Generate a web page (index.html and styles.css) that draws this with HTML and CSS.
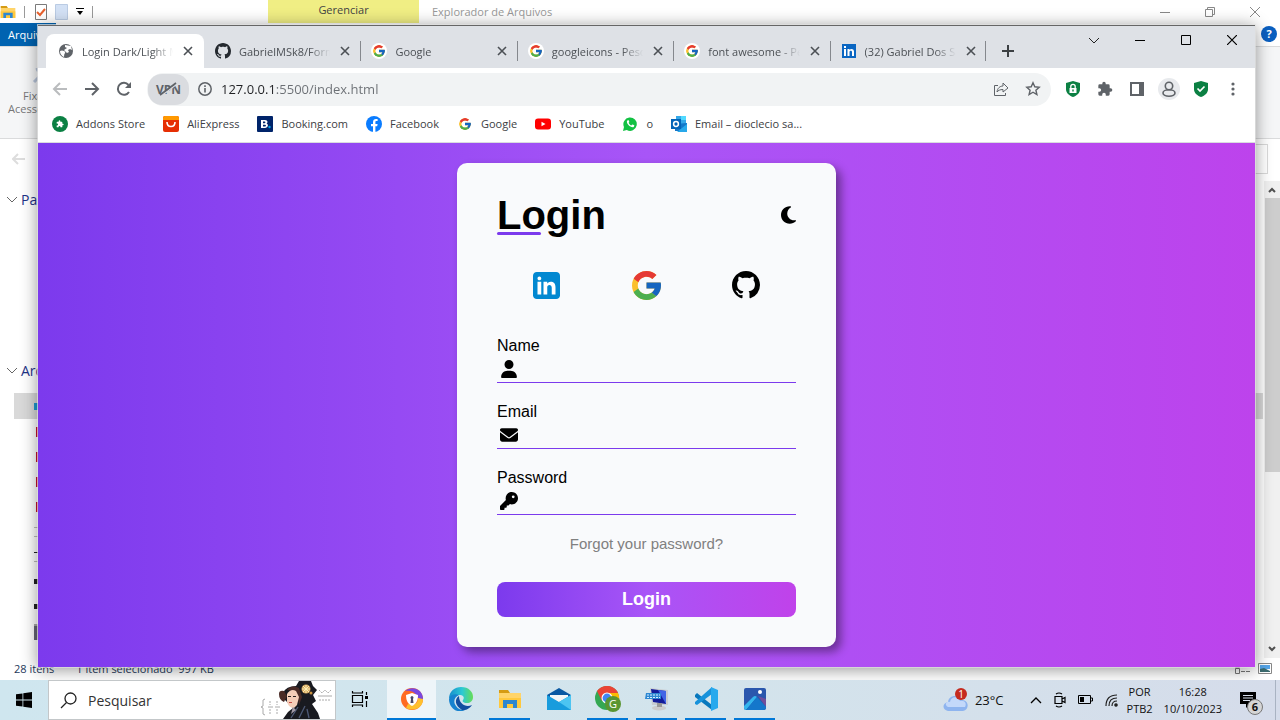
FILE: index.html
```html
<!DOCTYPE html>
<html lang="pt-BR">
<head>
<meta charset="utf-8">
<title>Login Dark/Light</title>
<link rel="stylesheet" href="styles.css">
</head>
<body>
<svg class="sprite" aria-hidden="true">
  <symbol id="google" viewBox="4 4 40 40">
    <path fill="#fbc02d" d="M43.6 20H24v8h11.3c-1.6 4.7-6.1 8-11.3 8-6.600 0-12-5.400-12-12s5.400-12 12-12c3.100 0 5.800 1.200 8 3l5.700-5.600C34 6 29.300 4 24 4 13 4 4 13 4 24s9 20 20 20 20-9 20-20c0-1.300-.1-2.700-.4-4z"/>
    <path fill="#e53935" d="M6.300 14.700l6.600 4.800C14.700 15.100 19 12 24 12c3.100 0 5.800 1.200 8 3l5.700-5.600C34 6 29.300 4 24 4 16.300 4 9.700 8.300 6.300 14.700z"/>
    <path fill="#4caf50" d="M24 44c5.200 0 9.900-2 13.400-5.200l-6.200-5.200C29.200 35 26.700 36 24 36c-5.200 0-9.600-3.300-11.300-7.900l-6.500 5C9.500 39.600 16.200 44 24 44z"/>
    <path fill="#1565c0" d="M43.600 20H24v8h11.300c-.8 2.200-2.200 4.200-4.100 5.600l6.200 5.200C37 39.200 44 34 44 24c0-1.300-.1-2.700-.4-4z"/>
  </symbol>
  <symbol id="github" viewBox="0 0 16 16">
    <path d="M8 0C3.580 0 0 3.580 0 8c0 3.540 2.290 6.530 5.470 7.590.4.070.55-.17.55-.38 0-.19-.01-.82-.01-1.490-2.010.370-2.530-.49-2.690-.94-.09-.23-.48-.94-.82-1.130-.28-.15-.68-.52-.01-.53.63-.01 1.080.58 1.230.82.72 1.210 1.870.87 2.330.66.07-.52.28-.87.51-1.070-1.780-.2-3.640-.89-3.640-3.950 0-.87.31-1.590.82-2.150-.08-.2-.36-1.020.08-2.120 0 0 .67-.21 2.200.82.64-.18 1.320-.27 2-.27s1.360.09 2 .27c1.530-1.040 2.200-.82 2.200-.82.44 1.100.16 1.920.08 2.120.51.56.82 1.270.82 2.150 0 3.070-1.870 3.750-3.650 3.950.29.25.54.73.54 1.480 0 1.070-.01 1.930-.01 2.200 0 .21.15.46.55.38A8.010 8.010 0 0 0 16 8c0-4.420-3.580-8-8-8z"/>
  </symbol>
  <symbol id="linkedin" viewBox="6 6 36 36">
    <path d="M42 37c0 2.760-2.240 5-5 5H11c-2.760 0-5-2.240-5-5V11c0-2.760 2.240-5 5-5h26c2.760 0 5 2.240 5 5z"/>
    <path fill="#fff" d="M12 19h5v17h-5zM14.500 17C13 17 12 15.900 12 14.500 12 13.100 13 12 14.500 12c1.500 0 2.500 1.100 2.500 2.500S16 17 14.500 17zM36 36h-5v-9.100c0-2.200-1.200-3.700-3.200-3.700-1.500 0-2.300 1-2.700 2-.1.300-.1 1.300-.1 1.800v9h-5V19h5v2.600c.7-1.100 1.900-2.600 4.700-2.600 3.600 0 6.300 2.300 6.300 7.300z"/>
  </symbol>
  <symbol id="close" viewBox="0 0 10 10"><path d="M1 1l8 8M9 1L1 9" fill="none" stroke="currentColor" stroke-width="1.600"/></symbol>
  <symbol id="shield" viewBox="0 0 16 18"><path fill="#0b8043" d="M8 1l7 2v6c0 4-3 6.500-7 8-4-1.500-7-4-7-8V3z"/></symbol>
  <symbol id="puzzle" viewBox="0 0 24 24"><path d="M20.500 11H19V7a2 2 0 0 0-2-2h-4V3.500a2.500 2.500 0 0 0-5 0V5H4a2 2 0 0 0-2 2v3.800h1.500a2.700 2.700 0 0 1 0 5.400H2V20a2 2 0 0 0 2 2h3.800v-1.500a2.700 2.700 0 0 1 5.400 0V22H17a2 2 0 0 0 2-2v-4h1.500a2.500 2.500 0 0 0 0-5z"/></symbol>
  <symbol id="chevron" viewBox="0 0 12 7"><path d="M1 1l5 5 5-5" fill="none" stroke="currentColor"/></symbol>
  <symbol id="folder" viewBox="0 0 24 20">
    <path fill="#d59b13" d="M1 1h9l2 3H1z"/><path fill="#ffd469" d="M1 4h22v15H1z"/><path fill="#ffc83d" d="M1 9h22v10H1z"/>
    <path fill="#2c87d1" d="M5 11h14v8h-4v-4H9v4H5z"/>
  </symbol>
</svg>

<div class="desktop">
  <section class="explorer" aria-label="Explorador de Arquivos">
    <header class="ex-title">
      <div class="ex-quick">
        <svg width="16" height="16"><use href="#folder"/></svg><i></i>
        <svg width="12" height="16" viewBox="0 0 12 16"><path fill="#fff" stroke="#7a7a7a" d="M.5.5h11v15H.5z"/><path d="M2 8l3 3 5-6" fill="none" stroke="#e8602c" stroke-width="2"/></svg>
        <svg width="13" height="16" viewBox="0 0 13 16"><path fill="#d3e1f5" stroke="#bacbe3" d="M.5.5h12v15H.5z"/></svg>
        <svg width="8" height="8" viewBox="0 0 8 8"><path d="M0 0h8v1H0zM1 3h6L4 7z"/></svg><i></i>
      </div>
      <span class="ex-manage">Gerenciar</span>
      <span class="ex-name">Explorador de Arquivos</span>
      <div class="ex-controls">
        <svg width="10" height="10"><path d="M0 5.500h10" stroke="#888"/></svg>
        <svg width="10" height="10"><path d="M.5 2.500h7v7h-7zM2.500 2V.5h7v7H8" fill="none" stroke="#888"/></svg>
        <svg width="10" height="10"><path d="M0 0l10 10M10 0L0 10" stroke="#888"/></svg>
      </div>
    </header>
    <div class="ex-menu"><button class="ex-file">Arquivo</button><span class="ex-help">?</span></div>
    <div class="ex-ribbon"><svg width="20" height="20" viewBox="0 0 20 20"><path d="M2 18l7-7M5 5l10 10M4 6l10-4" fill="none" stroke="#b8c5da" stroke-width="3"/></svg><span>Fixar no</span><span>Acesso</span></div>
    <div class="ex-address">
      <svg width="13" height="12" viewBox="0 0 13 12"><path d="M13 6H1M6 1L1 6l5 5" fill="none" stroke="#ddd" stroke-width="2"/></svg>
      <div class="ex-search"></div>
    </div>
    <div class="ex-body">
      <div class="ex-list">
        <div class="ex-group ex-folders"><svg width="12" height="7"><use href="#chevron"/></svg>Pastas</div>
        <div class="ex-group"><svg width="12" height="7"><use href="#chevron"/></svg>Arquivos</div>
        <ul class="ex-files">
          <li class="selected"><i class="f-blue"></i></li>
          <li><i class="f-red"></i></li><li><i class="f-red"></i></li><li><i class="f-red"></i></li><li><i class="f-red"></i></li>
          <li><i class="f-text"></i></li><li><i class="f-text f-top"></i></li>
          <li><i class="f-black"></i></li><li><i class="f-black"></i></li><li><i class="f-bin"></i></li>
        </ul>
      </div>
      <div class="ex-scroll">
        <svg width="8" height="6" viewBox="0 0 8 6"><path d="M1 5l3-3 3 3" fill="none" stroke="#505050" stroke-width="2"/></svg>
        <div class="ex-thumb"></div>
        <svg width="8" height="6" viewBox="0 0 8 6"><path d="M1 1l3 3 3-3" fill="none" stroke="#505050" stroke-width="2"/></svg>
      </div>
    </div>
    <footer class="ex-status"><span>28 itens</span><span>1 item selecionado&nbsp; 997 KB</span>
      <div class="ex-views">
        <svg width="16" height="12" viewBox="0 0 16 12"><path d="M.5.5h4v5h-4zM.5 6.500h4v5h-4z" fill="#fff" stroke="#777"/><path d="M6 3.500h4m1 0h4M6 9.500h4m1 0h4" stroke="#777"/></svg>
        <svg width="14" height="11" viewBox="0 0 14 11"><path fill="#fff" stroke="#888" d="M.5.5h13v10H.5z"/><path fill="#56a5e8" d="M2 2h10v4H2z"/><path fill="#3b6b6f" d="M2 6l4-1 6 3v1H2z"/></svg>
      </div>
    </footer>
  </section>

  <section class="browser" aria-label="Navegador">
    <header class="tabs">
      <div class="tab-list">
      <div class="tab active"><svg width="16" height="16" viewBox="0 0 16 16"><circle cx="8" cy="8" r="7" fill="#5f6368"/><path d="M2 8q2-1 4 0t1 2-1 4Q2 12 2 8zM7 2l6 1 1 4-2-1-2 1 1 2-2 1-3-3 3-2-2-1z" fill="#fff"/></svg><span>Login Dark/Light Mode</span><button aria-label="Fechar"><svg width="10" height="10"><use href="#close"/></svg></button></div>
      <div class="tab"><svg width="16" height="16" fill="#24292f"><use href="#github"/></svg><span>GabrielMSk8/Formulario</span><button aria-label="Fechar"><svg width="10" height="10"><use href="#close"/></svg></button></div>
      <div class="tab"><svg class="disc" width="16" height="16"><use href="#google"/></svg><span>Google</span><button aria-label="Fechar"><svg width="10" height="10"><use href="#close"/></svg></button></div>
      <div class="tab"><svg class="disc" width="16" height="16"><use href="#google"/></svg><span>googleicons - Pesquisa</span><button aria-label="Fechar"><svg width="10" height="10"><use href="#close"/></svg></button></div>
      <div class="tab"><svg class="disc" width="16" height="16"><use href="#google"/></svg><span>font awesome - Pesquisa</span><button aria-label="Fechar"><svg width="10" height="10"><use href="#close"/></svg></button></div>
      <div class="tab"><svg width="16" height="16" viewBox="0 0 16 16"><path fill="#0a66c2" d="M1 1h14v14H1z"/><path fill="#fff" d="M3 6h2v7H3zM3 3h2v2H3zM6.500 6h2v1c1-1.700 4.500-1.500 4.500 1.500V13h-2V9c0-1.800-2.500-1.800-2.500 0v4h-2z"/></svg><span>(32) Gabriel Dos Santos</span><button aria-label="Fechar"><svg width="10" height="10"><use href="#close"/></svg></button></div>
      </div>
      <button class="new-tab" aria-label="Nova guia"><svg width="12" height="12"><path d="M6 0v12M0 6h12" stroke="#3c4043" stroke-width="2"/></svg></button>
      <div class="win-controls">
        <button aria-label="Guias"><svg width="12" height="7"><use href="#chevron"/></svg></button>
        <button aria-label="Minimizar"><svg width="10" height="10"><path d="M0 5.500h10" stroke="#000"/></svg></button>
        <button aria-label="Maximizar"><svg width="10" height="10"><path d="M.5.500h9v9h-9z" fill="none" stroke="#000"/></svg></button>
        <button aria-label="Fechar janela"><svg width="10" height="10"><path d="M0 0l10 10M10 0L0 10" stroke="#000" stroke-width="1.200"/></svg></button>
      </div>
    </header>
    <div class="toolbar">
      <button aria-label="Voltar"><svg width="16" height="14" viewBox="0 0 16 14"><path d="M15 7H2M8 1L2 7l6 6" fill="none" stroke="#babcbe" stroke-width="2"/></svg></button>
      <button aria-label="Avançar"><svg width="16" height="14" viewBox="0 0 16 14"><path d="M1 7h13M8 1l6 6-6 6" fill="none" stroke="#5f6368" stroke-width="2"/></svg></button>
      <button aria-label="Recarregar"><svg width="16" height="16" viewBox="0 0 16 16"><path d="M13 11a6 6 0 1 1-.5-7" fill="none" stroke="#5f6368" stroke-width="2"/><path fill="#5f6368" d="M15 1v6H9z"/></svg></button>
      <div class="omnibox">
        <button class="vpn">VPN<svg width="24" height="14" viewBox="0 0 24 14"><path d="M5 14L21 2" stroke="#dadce0" stroke-width="1.500"/><path d="M4 13L20 1" stroke="#5f6368" stroke-width="1.600"/></svg></button>
        <svg width="14" height="14" viewBox="0 0 14 14"><circle cx="7" cy="7" r="6.200" fill="none" stroke="#5f6368" stroke-width="1.500"/><path d="M6.200 6h1.600v4.500H6.200zM6.200 3.300h1.600v1.600H6.200z" fill="#5f6368"/></svg>
        <input class="url" aria-label="Endereço" value="127.0.0.1:5500/index.html">
        <button aria-label="Compartilhar"><svg width="16" height="16" viewBox="0 0 16 16" fill="none" stroke="#5f6368"><path d="M5 4.500H1.500v10h11V12"/><path d="M4 11c.5-4 3-6 6-6V2l5 5-5 4V8.500c-3 0-5 1-6 2.500z"/></svg></button>
        <button aria-label="Favoritar"><svg width="16" height="16" viewBox="0 0 16 16"><path d="M8 1.800l1.800 4 4.400.4-3.300 3 1 4.300L8 11.200l-3.900 2.300 1-4.300-3.300-3 4.400-.4z" fill="none" stroke="#5f6368" stroke-width="1.400"/></svg></button>
      </div>
      <button aria-label="VPN segura"><svg width="16" height="18" viewBox="0 0 16 18"><use href="#shield"/><path fill="none" stroke="#fff" stroke-width="1.300" d="M5.800 8V6.500a2.200 2.200 0 0 1 4.400 0V8"/><path fill="#fff" d="M4.500 8h7v5h-7z"/><path fill="#0b8043" d="M7.300 9.500h1.400v2H7.300z"/></svg></button>
      <button aria-label="Extensões"><svg width="16" height="16" fill="#5f6368"><use href="#puzzle"/></svg></button>
      <button aria-label="Painel lateral"><svg width="14" height="14" viewBox="0 0 14 14"><path d="M0 0h14v14H0zM2 2v10h7V2z" fill="#5f6368" fill-rule="evenodd"/></svg></button>
      <button class="profile" aria-label="Perfil"><svg width="16" height="16" viewBox="0 0 16 16" fill="none" stroke="#5f6368" stroke-width="1.600"><circle cx="8" cy="5" r="3.700"/><ellipse cx="8" cy="12" rx="6" ry="3.200"/></svg></button>
      <button aria-label="Proteção"><svg width="16" height="18" viewBox="0 0 16 18"><use href="#shield"/><path fill="none" stroke="#fff" stroke-width="1.700" d="M4.500 8.500L7 11l4.500-4.500"/></svg></button>
      <button aria-label="Menu"><svg width="4" height="14" fill="#5f6368"><circle cx="2" cy="2" r="1.600"/><circle cx="2" cy="7" r="1.600"/><circle cx="2" cy="12" r="1.600"/></svg></button>
    </div>
    <nav class="bookmarks">
      <a href="#"><svg width="16" height="16" viewBox="0 0 16 16"><circle cx="8" cy="8" r="8" fill="#0b8043"/><use href="#puzzle" x="4" y="4" width="8" height="8" fill="#fff"/></svg>Addons Store</a>
      <a href="#"><svg width="16" height="16" viewBox="0 0 16 16"><rect width="16" height="16" rx="2" fill="#e62e04"/><path d="M0 2q0-2 2-2h12q2 0 2 2v2H0z" fill="#ff9900"/><path d="M4 6c0 6 8 6 8 0" fill="none" stroke="#fff" stroke-width="1.600"/></svg>AliExpress</a>
      <a href="#"><svg width="16" height="16" viewBox="0 0 16 16"><rect width="16" height="16" rx="1" fill="#00246a"/><path fill="#fff" fill-rule="evenodd" d="M4 4h4c3 0 3 3 1.500 3.600C12 8.500 11 12 8 12H4zM6 5.500v1.700h1.500c1.200 0 1.200-1.700 0-1.700zM6 8.700v1.800h2c1.300 0 1.300-1.800 0-1.800z"/><circle cx="12.500" cy="11" r="1.200" fill="#00a7ea"/></svg>Booking.com</a>
      <a href="#"><svg width="16" height="16" viewBox="0 0 16 16"><circle cx="8" cy="8" r="8" fill="#0a7cff"/><path fill="#fff" d="M7 16v-5.700H5V8h2V6.200C7 4.200 8.200 3 10 3l1.600.1v2h-1c-1 0-1.200.5-1.200 1.200V8h2.200l-.4 2.300H9.400V16z"/></svg>Facebook</a>
      <a href="#"><svg class="disc" width="16" height="16"><use href="#google"/></svg>Google</a>
      <a href="#"><svg width="16" height="16" viewBox="0 0 16 16"><rect y="2.500" width="16" height="11" rx="3" fill="#f00"/><path fill="#fff" d="M6.500 5.700v4.600l4-2.300z"/></svg>YouTube</a>
      <a href="#"><svg width="16" height="16" viewBox="0 0 16 16"><path fill="#12c143" d="M1 15l1-4a6.700 6.700 0 1 1 2.800 3z"/><path d="M5 4.700c-1 3 4 7.500 6.700 6.300.8-.7.700-1.700.3-1.900l-1.800-.7-1 1C8 9 7 8 6.600 6.800l.8-.9L6.500 4z" fill="#fff"/></svg>o</a>
      <a href="#"><svg width="16" height="16" viewBox="0 0 16 16"><path fill="#35a8e8" d="M5 0h10v8H5z"/><path fill="#50d9ff" d="M10 0h5v4h-5z"/><path fill="#1477c9" d="M4 8l12-1v8H4z"/><path fill="#28a8ea" d="M16 8v8H6z"/><rect y="3" width="10" height="10" fill="#0364b8"/><circle cx="5" cy="8" r="2.400" fill="none" stroke="#fff" stroke-width="1.500"/></svg>Email – dioclecio sa...</a>
    </nav>
    <main class="page">
      <form class="card">
        <div class="card-head">
          <h1>Login</h1>
          <button type="button" class="mode" aria-label="Modo escuro"><svg width="15" height="18" viewBox="0 32 384 448"><path d="M223.500 32C100 32 0 132.300 0 256S100 480 223.500 480c60.600 0 115.500-24.200 155.800-63.400c5-4.900 6.300-12.500 3.100-18.700s-10.100-9.700-17-8.500c-9.800 1.700-19.800 2.600-30.100 2.600c-96.900 0-175.500-78.800-175.500-176c0-65.800 36-123.100 89.300-153.300c6.100-3.500 9.200-10.500 7.700-17.300s-7.300-11.900-14.300-12.500c-6.300-.5-12.600-.8-19-.8z"/></svg></button>
        </div>
        <div class="social">
          <a href="#" aria-label="LinkedIn"><svg width="27" height="27" fill="#0288d1"><use href="#linkedin"/></svg></a>
          <a href="#" aria-label="Google"><svg width="29" height="29"><use href="#google"/></svg></a>
          <a href="#" aria-label="GitHub"><svg width="28" height="28"><use href="#github"/></svg></a>
        </div>
        <div class="fields">
          <div class="field"><label for="name">Name</label><div class="entry"><svg width="18" height="18" viewBox="-32 0 512 512"><path d="M224 256A128 128 0 1 0 224 0a128 128 0 1 0 0 256zm-45.700 48C79.800 304 0 383.800 0 482.300C0 498.700 13.300 512 29.700 512H418.300c16.400 0 29.700-13.300 29.700-29.700C448 383.800 368.200 304 269.700 304H178.300z"/></svg><input id="name" type="text"></div></div>
          <div class="field"><label for="email">Email</label><div class="entry"><svg width="18" height="18" viewBox="0 0 512 512"><path d="M48 64C21.500 64 0 85.500 0 112c0 15.100 7.100 29.300 19.200 38.400L236.800 313.600c11.400 8.500 27 8.500 38.400 0L492.800 150.400c12.100-9.100 19.200-23.300 19.200-38.400c0-26.500-21.500-48-48-48H48zM0 176V384c0 35.300 28.700 64 64 64H448c35.300 0 64-28.700 64-64V176L294.400 339.200c-22.800 17.100-54 17.100-76.800 0L0 176z"/></svg><input id="email" type="email"></div></div>
          <div class="field"><label for="password">Password</label><div class="entry"><svg width="18" height="18" viewBox="0 0 512 512"><path d="M336 352c97.200 0 176-78.800 176-176S433.200 0 336 0S160 78.800 160 176c0 18.700 2.900 36.800 8.300 53.700L7 391c-4.500 4.500-7 10.600-7 17v80c0 13.300 10.700 24 24 24h80c13.300 0 24-10.700 24-24V448h40c13.300 0 24-10.700 24-24V384h40c6.400 0 12.500-2.500 17-7l33.300-33.300c16.900 5.400 35 8.300 53.700 8.300zM376 96a40 40 0 1 1 0 80 40 40 0 1 1 0-80z"/></svg><input id="password" type="password"></div></div>
        </div>
        <a class="forgot" href="#">Forgot your password?</a>
        <button type="submit" class="submit">Login</button>
      </form>
    </main>
  </section>

  <footer class="taskbar">
    <button class="start" aria-label="Iniciar"><svg width="16" height="16" viewBox="0 0 16 16"><path d="M0 2.300L6.500 1.400v6.200H0zM7.300 1.300L16 0v7.600H7.300zM0 8.400h6.500v6.200L0 13.700zM7.300 8.400H16V16l-8.700-1.300z"/></svg></button>
    <div class="search">
      <svg width="17" height="17" viewBox="0 0 17 17" fill="none" stroke="#222" stroke-width="1.300"><circle cx="10.500" cy="6.500" r="5.500"/><path d="M6.500 10.500L1 16"/></svg>
      <input aria-label="Pesquisar" placeholder="Pesquisar">
      <svg width="76" height="38" viewBox="0 0 76 38">
        <g stroke="#aaa" fill="none"><path d="M6 18q-3 0-2 4t-2 4q3 0 2 4t2 4M9 26h5M16 26h5M59 15h14"/><path d="M11 20v4m0 4v5m7-13v4m0 4v5M60 9l3 3 3-3 3 3 3-3M60 19h12" stroke-dasharray="2 1"/></g>
        <path fill="#191a20" d="M24 12q3-7 13-7l3-5h12l2 5 4 4-4 5 3 6-4 3 6 9 2 6H24l5-7 5-4-8-8z"/>
        <path fill="#4a2b26" d="M20 13q0-4 5-3l3 5-3 6q-5-2-5-8zM28 9q5-6 12-2l3 9-3 8q-1-12-6-14z"/>
        <path fill="#f5cdb8" d="M28 13q4-6 9-3l3 6-2 8-3 3q-5 0-7-6z"/><path fill="#c74a45" d="M30 21h3v1h-3z"/><path fill="#29201f" d="M29 15h3v1h-3zM34 15h3v1h-3z"/>
        <circle cx="47" cy="8" r="4.500" fill="#d5a963"/><path d="M43 8h8M47 4v8M44 5l6 6M50 5l-6 6" stroke="#fff0b4"/><circle cx="52" cy="12" r="1.500" fill="#c9903f"/>
        <path d="M32 37l7-11M40 37l6-12M50 37l-2-9" stroke="#4d5875" stroke-width="1.300"/><path fill="#a29aa7" d="M34 26l3 3-5 4z"/>
      </svg>
    </div>
    <button class="task view" aria-label="Visão de tarefas"><svg width="18" height="16" viewBox="0 0 18 16" fill="none" stroke="#000" stroke-width="1.200"><path d="M1.500 4.500h10v7h-10zM1.500 0v2h10V0M1.500 16v-2h10v2M15.500 1v3m0 6v6"/><path d="M14 5h3v3h-3z" fill="#000" stroke="none"/></svg></button>
    <button class="task current" aria-label="Navegador Seguro"><svg width="24" height="24" viewBox="0 0 24 24"><circle cx="12" cy="12" r="11" fill="#ff6b22"/><path fill="#7948df" d="M5 4C12-2 23 2 23 12h-5C17 5 10 3 5 4z"/><path fill="#ffc02e" d="M23 12c0 9-9 13-17 9l2-4c6 2 10 0 10-6z"/><path fill="#fff" d="M12 6l6 2c0 6-2 9-6 11-4-2-6-5-6-11z"/><path fill="#4a4967" d="M12 9a2 2 0 0 1 1 3l.5 4h-3l.5-4a2 2 0 0 1 1-3z"/></svg></button>
    <button class="task" aria-label="Edge"><svg width="24" height="24" viewBox="0 0 24 24"><defs><linearGradient id="eg" x1="0" x2="1"><stop stop-color="#168dcc"/><stop offset=".55" stop-color="#2cc9d4"/><stop offset="1" stop-color="#66dd55"/></linearGradient></defs><path fill="url(#eg)" d="M0 12C0 4 6 0 12 0c8 0 12 5 12 10 0 4-3 6-6 6-4 0-5-2-4-3 2-3 0-5-4-5C5 8 1 10 0 12z"/><path fill="#1682cf" d="M0 12c1-4 6-6 10-4-5 2-6 7-3 11 2 3 5 4 9 4C8 27 0 21 0 12z"/><path fill="#124f9f" d="M10 9c-5 3-4 10 3 14 4 1 8-2 10-5-6 3-13-1-13-9z"/></svg></button>
    <button class="task open" aria-label="Explorador"><svg width="24" height="20"><use href="#folder"/></svg></button>
    <button class="task" aria-label="Email"><svg width="24" height="24" viewBox="0 0 24 24"><path fill="#0a58a2" d="M0 8l12-7 12 7v4H0z"/><path fill="#f4f5f6" d="M3 8h18v8H3z"/><path fill="#189cdd" d="M0 8l12 7L24 8v15H0z"/><path fill="#4cc4f1" d="M12 15l12-7v15z"/></svg></button>
    <button class="task open" aria-label="Chrome"><svg width="26" height="26" viewBox="0 0 26 26"><circle cx="12" cy="12" r="12" fill="#34a853"/><path fill="#ea4335" d="M2 5C8-3 20-1 23 7H12L7 15z"/><path fill="#fbbc05" d="M12 7h11c4 8-2 17-11 17l5-9z"/><circle cx="12" cy="12" r="5.500" fill="#fff"/><circle cx="12" cy="12" r="4.400" fill="#4285f4"/><circle cx="18" cy="18" r="8" fill="#5a9532"/><text x="18" y="22" text-anchor="middle" font-size="11" fill="#fff">G</text></svg></button>
    <button class="task open" aria-label="Teclado virtual"><svg width="24" height="24" viewBox="0 0 24 24"><path fill="#c9cdd2" d="M5 1l18 2v15H7z"/><path fill="#131c99" d="M6 2l15 2v13L8 15z"/><path fill="#4265e6" d="M13 3l8 1v13z"/><ellipse cx="14" cy="21" rx="7" ry="2.500" fill="#ccc"/><path fill="#999" d="M12 16h5v4h-5z"/><path fill="#2e88d2" d="M1 6h15v6H0z"/><path d="M2 8h13M2 10.500h13" stroke="#d7efff" stroke-dasharray="2 1"/></svg></button>
    <button class="task open" aria-label="VS Code"><svg width="24" height="24" viewBox="0 0 24 24"><path fill="#0878bd" d="M1 8l2-2 15 12v5L1 10z"/><path fill="#1792db" d="M1 15l17-15v7L3 18l-2-1z"/><path fill="#28a9ed" d="M17 0l7 3v18l-7 3z"/></svg></button>
    <button class="task open" aria-label="Fotos"><svg width="24" height="24" viewBox="0 0 24 24"><rect x="1" y="1" width="22" height="22" rx="2" fill="#2a57ad"/><path fill="#704e9c" d="M15 9l8 3v8z"/><path fill="#34b5ed" d="M1 19L10 10q2-2 4 0l-11 13q-2 0-2-2z"/><path fill="#1477cb" d="M3 23L14 10l9 10q0 3-3 3z"/><circle cx="17" cy="5" r="2" fill="#fff"/></svg></button>
    <div class="tray">
      <span class="weather"><svg width="28" height="26" viewBox="0 0 28 26"><path fill="#8eb4ef" d="M5 24c-6-1-6-8 0-9 1-7 10-8 13-2 8-1 9 10 2 11z"/><path fill="#c3d8fa" d="M5 20c-4-2-2-6 2-5 1-6 8-6 10-1 5-1 7 3 5 6z"/><circle cx="18" cy="7" r="6" fill="#c52b1f"/><text x="18" y="11" text-anchor="middle" font-size="10" fill="#fff">1</text></svg>23°C</span>
      <svg width="12" height="7" viewBox="0 0 12 7"><path d="M1 6l5-5 5 5" fill="none" stroke="#000" stroke-width="1.300"/></svg>
      <svg width="12" height="16" viewBox="0 0 12 16" fill="none" stroke="#000" stroke-width="1.200"><path d="M1 4.500h7v7H1zM8 7l3-1.500v5L8 9M2 2q3-2 6 0M2 14q3 2 6 0"/></svg>
      <svg width="15" height="10" viewBox="0 0 15 10"><path d="M.5.500h12v8H.5zM12.500 3h2v3h-2" fill="none" stroke="#000"/><path d="M2 2h4v5H2z"/></svg>
      <svg width="13" height="13" viewBox="0 0 13 13" fill="none" stroke="#222" stroke-width="1.200"><path d="M1 12Q1 1 12 1M4 12q0-8 8-8M7 12q0-5 5-5"/><circle cx="11" cy="11" r="1.200" fill="#222"/></svg>
      <span class="stack lang"><span>POR</span><span>PTB2</span></span>
      <span class="stack clock"><span>16:28</span><span>10/10/2023</span></span>
      <button class="notices" aria-label="Notificações"><svg width="16" height="16" viewBox="0 0 16 16"><path d="M0 0h16v12h-6l-4 4v-4H0z"/><path d="M3 3.500h10M3 6h10M3 8.500h7" stroke="#d5dce9"/></svg><span>6</span></button>
    </div>
  </footer>
</div>
</body>
</html>
```
FILE: styles.css
```css
* { box-sizing: border-box; }
body { margin: 0; font-family: "Segoe UI", "Open Sans", sans-serif; font-size: 11px; color: #333; }
button { border: 0; padding: 0; background: none; font: inherit; color: inherit; display: flex; align-items: center; justify-content: center; }
input { border: 0; outline: 0; background: none; font: inherit; color: inherit; min-width: 0; padding: 0; }
a { color: inherit; text-decoration: none; }
svg { display: block; flex: none; }
.sprite { position: absolute; width: 0; height: 0; }
.desktop { position: relative; height: 100vh; display: flex; flex-direction: column; overflow: hidden; }

/* File explorer behind the browser */
.explorer { flex: 1; min-height: 0; display: flex; flex-direction: column; background: #fff; }
.ex-title { height: 23px; display: flex; align-items: stretch; }
.ex-quick { width: 268px; display: flex; align-items: center; gap: 8px; }
.ex-quick i { width: 1px; height: 12px; background: #999; }
.ex-quick i:nth-of-type(1) { margin-right: 2px; }
.ex-manage { width: 151px; background: #f0ee84; text-align: center; line-height: 20px; color: #444; }
.ex-name { margin-left: 13px; line-height: 24px; color: #999; }
.ex-controls { margin-left: auto; padding-right: 20px; display: flex; align-items: center; gap: 35px; }
.ex-menu { height: 24px; display: flex; justify-content: space-between; border-bottom: 1px solid #dadbdc; }
.ex-file { width: 56px; background: #0063b1; color: #fff; }
.ex-help { width: 16px; height: 16px; margin: 3px; border-radius: 50%; background: #0a5fc0; color: #fff; font-weight: 700; line-height: 16px; text-align: center; }
.ex-ribbon { height: 92px; padding: 17px 0 0 8px; background: #f5f6f7; border-bottom: 1px solid #dadbdc; display: flex; flex-direction: column; color: #777; line-height: 13px; }
.ex-ribbon svg { margin: 0 0 5px 24px; }
.ex-ribbon span:nth-of-type(1) { padding-left: 15px; }
.ex-address { height: 42px; padding: 5px 12px 7px; display: flex; justify-content: space-between; align-items: center; }
.ex-search { width: 240px; height: 30px; border: 1px solid #d9d9d9; }
.ex-body { flex: 1; min-height: 0; display: flex; }
.ex-list { flex: 1; padding-top: 8px; overflow: hidden; }
.ex-group { height: 21px; padding-left: 6px; display: flex; align-items: center; gap: 3px; font-size: 14px; color: #1e3287; }
.ex-group svg { color: #666; }
.ex-folders { margin-bottom: 150px; }
.ex-files { margin: 12px 0 0 14px; padding: 0; list-style: none; }
.ex-files li { height: 25px; padding-left: 20px; display: flex; align-items: center; }
.ex-files .selected { background: #d9d9d9; height: 26px; margin-right: 1px; }
.ex-files i { width: 16px; height: 10px; }
.f-blue { background: #1e9bd1; max-height: 7px; }
.f-red { background: #c8102e; margin-left: 2px; }
.f-text { border: solid #bbb; border-width: 1px 0; }
.f-top { border-top-color: #222; }
.f-black { background: #222; max-height: 5px; }
.ex-files .f-bin { background: #667; height: 16px; border-top: 2px solid #aaa; }
.ex-scroll { width: 16px; background: #f0f0f0; display: flex; flex-direction: column; align-items: center; padding: 6px 0; }
.ex-scroll svg:last-child { margin-top: auto; }
.ex-thumb { width: 15px; height: 59%; margin-top: 5px; background: #cdcdcd; }
.ex-status { height: 22px; padding: 0 8px 2px 14px; display: flex; align-items: center; gap: 22px; color: #1e395b; }
.ex-views { margin-left: auto; display: flex; gap: 7px; align-items: center; }

/* Browser window */
.browser { position: absolute; inset: 25px 25px 53px 38px; display: flex; flex-direction: column; background: #fff; border-top: 1px solid #666; box-shadow: 0 0 0 1px rgba(225, 225, 225, .7), 0 2px 16px rgba(0, 0, 0, .45); }
.tabs { height: 42px; padding: 8px 0 0 8px; background: #dee1e6; display: flex; }
.tab-list { flex: 0 1 940px; display: grid; grid-template-columns: 158px repeat(5, minmax(0, 1fr)); }
.tab { padding: 0 10px 0 11px; display: flex; align-items: center; gap: 8px; position: relative; color: #4c5055; }
.tab.active { padding: 0 11px 0 12px; background: #fff; border-radius: 8px 8px 0 0; }
.tab + .tab + .tab::before, .tab:last-child::after { content: ""; position: absolute; left: 0; top: 7px; width: 1px; height: 20px; background: #85888d; }
.tab:last-child::after { left: auto; right: 0; }
.tab span { flex: 1; min-width: 0; overflow: hidden; white-space: nowrap; mask-image: linear-gradient(to right, #000 75%, transparent 98%); }
.disc { border-radius: 50%; background: #fff; padding: 2px; }
.new-tab { width: 44px; }
.win-controls { margin: -8px 0 0 auto; display: flex; height: 28px; color: #222; }
.win-controls button { width: 46px; }
.toolbar { height: 42px; padding: 0 6px; display: flex; align-items: center; }
.toolbar > button { width: 32px; height: 32px; }
.omnibox { flex: 1; height: 33px; margin: 0 6px 0 7px; padding-right: 10px; border-radius: 17px; background: #f1f3f4; display: flex; align-items: center; gap: 16px; }
.omnibox .vpn { position: relative; width: 41px; height: 31px; margin: 0 -7px 0 1px; border-radius: 14px; background: #dadce0; color: #5f6368; font-weight: 700; font-size: 12px; }
.vpn svg { position: absolute; left: 8px; top: 8px; }
.url { flex: 1; margin-left: -7px; font-size: 13px; color: transparent; background: linear-gradient(to right, #202124 55px, #6b6f74 55px); background-clip: text; }
.toolbar .profile { width: 22px; height: 22px; margin: 0 5px; border-radius: 50%; background: #e8eaed; }
.bookmarks { height: 33px; padding: 0 14px 5px; display: flex; align-items: center; gap: 18px; border-bottom: 1px solid #dadce0; color: #3c4043; }
.bookmarks a { display: flex; align-items: center; gap: 8px; }

/* Login page */
.page { flex: 1; min-height: 0; display: flex; align-items: center; justify-content: center; background: linear-gradient(to right, #7c3aed, #a855f7, #bd43ec); font-family: "Liberation Sans", Arial, sans-serif; color: #000; }
.card { width: 379px; padding: 30px 40px; border-radius: 10px; background: #f9fafc; box-shadow: 5px 5px 10px rgba(0, 0, 0, .4); display: flex; flex-direction: column; }
.card-head { display: flex; justify-content: space-between; align-items: center; }
h1 { position: relative; margin: 0; font-size: 40px; line-height: 44px; }
h1::after { content: ""; position: absolute; left: 0; bottom: 2px; width: 44px; height: 3px; border-radius: 2px; background: #7c3aed; }
.social { height: 36px; margin: 30px 0 34px; display: grid; grid-template-columns: repeat(3, 1fr); align-items: center; justify-items: center; }
.fields { display: flex; flex-direction: column; gap: 20px; }
.field { display: flex; flex-direction: column; font-size: 16px; line-height: 18px; }
.entry { height: 28px; padding-left: 3px; display: flex; align-items: center; gap: 8px; border-bottom: 1px solid #7c3aed; }
.entry input { flex: 1; height: 24px; }
.forgot { align-self: center; margin: 20px 0 29px; font-size: 15px; line-height: 18px; color: #808080; }
.submit { height: 35px; border-radius: 8px; background: linear-gradient(to right, #7c3aed, #a855f7, #c042ea); color: #fff; font-size: 18px; font-weight: 700; }

/* Taskbar */
.taskbar { position: relative; height: 40px; display: flex; background: linear-gradient(to right, #cfe6ef, #d3e4ec 55%, #d5dcea); color: #111; }
.start { width: 48px; }
.search { width: 288px; border: 1px solid #c3c7c9; background: #fff; display: flex; align-items: center; padding-left: 11px; gap: 11px; }
.search input { flex: 1; font-size: 14px; }
.search input::placeholder { color: #333; opacity: 1; }
.task { width: 49px; border-bottom: 2px solid transparent; }
.task.view { width: 51px; padding-right: 3px; }
.task.current { background: #eef5f9; border-color: #0078d7; }
.task.open { width: 41px; margin: 0 4px; border-color: #0078d7; }
.tray { margin-left: auto; padding-right: 4px; display: flex; align-items: center; gap: 12px; }
.weather { display: flex; align-items: center; gap: 4px; margin-right: 14px; font-size: 13px; }
.stack { display: flex; flex-direction: column; align-items: center; line-height: 17px; }
.lang { margin-left: -3px; }
.clock { margin-left: -1px; }
.notices { position: relative; width: 56px; height: 40px; margin: 0 0 0 -12px; border-right: 1px solid #a9b3c2; }
.tray .notices { margin-right: 0; padding-right: 2px; width: 54px; }
.notices span { position: absolute; left: 25px; top: 19px; width: 16px; height: 16px; border: 1px solid #777; border-radius: 50%; background: #d5d5d5; line-height: 14px; font-weight: 700; }
```
